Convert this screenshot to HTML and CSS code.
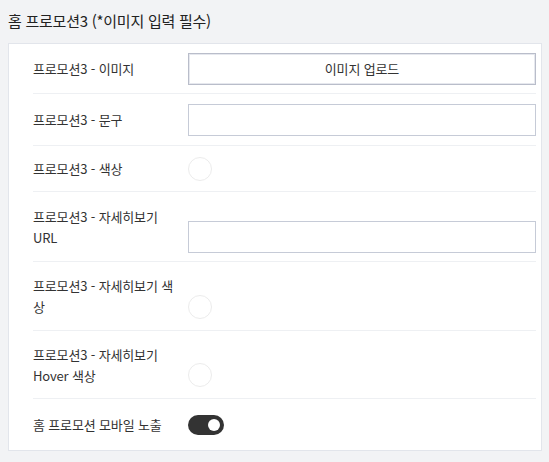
FILE: index.html
```html
<!DOCTYPE html>
<html lang="ko">
<head>
<meta charset="utf-8">
<link rel="stylesheet" href="styles.css">
</head>
<body>
<div class="page">
  <h2 class="title">홈 프로모션3 (*이미지 입력 필수)</h2>
  <div class="card">
    <div class="row row--r1">
      <div class="label">프로모션3 - 이미지</div>
      <div class="ctrl"><button class="upload" type="button">이미지 업로드</button></div>
    </div>
    <div class="row row--r2">
      <div class="label">프로모션3 - 문구</div>
      <div class="ctrl"><input class="field" type="text"></div>
    </div>
    <div class="row row--r3">
      <div class="label">프로모션3 - 색상</div>
      <div class="ctrl"><span class="swatch"></span></div>
    </div>
    <div class="row row--r4">
      <div class="label">프로모션3 - 자세히보기<br>URL</div>
      <div class="ctrl ctrl--low"><input class="field" type="text"></div>
    </div>
    <div class="row row--r5">
      <div class="label">프로모션3 - 자세히보기 색<br>상</div>
      <div class="ctrl ctrl--low"><span class="swatch"></span></div>
    </div>
    <div class="row row--r6">
      <div class="label">프로모션3 - 자세히보기<br>Hover 색상</div>
      <div class="ctrl ctrl--low"><span class="swatch"></span></div>
    </div>
    <div class="row row--r7">
      <div class="label">홈 프로모션 모바일 노출</div>
      <div class="ctrl"><span class="toggle"><span class="knob"></span></span></div>
    </div>
  </div>
</div>
</body>
</html>
```

FILE: styles.css
```css
* { box-sizing: border-box; }
html, body { margin: 0; padding: 0; }
body {
  background: #f2f3f5;
  font-family: "Noto Sans CJK KR", "Noto Sans", sans-serif;
  color: #333;
}
.page {
  width: 549px;
  height: 462px;
  padding: 8px 7px 0 8px;
}
.title {
  margin: 0 0 10px 0;
  height: 25px;
  font-size: 15px;
  line-height: 25px;
  font-weight: 400;
  color: #222;
  letter-spacing: -0.25px;
}
.card {
  background: #fff;
  border: 1px solid #e2e5eb;
  width: 534px;
  padding: 0 5px 0 24px;
}
.row {
  display: flex;
  align-items: center;
  border-bottom: 1px solid #eef0f3;
}
.row:last-child { border-bottom: none; }
.row--r1 { min-height: 50px; }
.row--r2 { min-height: 52px; }
.row--r3 { min-height: 46px; }
.row--r4 { min-height: 70px; }
.row--r5 { min-height: 69px; }
.row--r6 { min-height: 68px; }
.row--r7 { min-height: 51px; }
.label {
  width: 155px;
  flex: none;
  font-size: 13px;
  line-height: 21px;
  color: #333;
  letter-spacing: -0.15px;
}
.ctrl {
  flex: 1;
  display: flex;
  align-items: center;
}
.ctrl--low { padding-top: 21px; }
.upload {
  width: 100%;
  height: 32px;
  background: #fff;
  border: 1px solid #b9bdca;
  box-shadow: inset 0 0 0 1px #e6e8ee;
  font-family: "Noto Sans CJK KR", "Noto Sans", sans-serif;
  font-size: 13px;
  color: #333;
  padding: 0;
  letter-spacing: -0.15px;
}
.field {
  width: 100%;
  height: 32px;
  border: 1px solid #c6cbd7;
  background: #fff;
  margin: 0;
  padding: 0 8px;
  outline: none;
}
.swatch {
  display: block;
  width: 24px;
  height: 24px;
  border-radius: 50%;
  border: 1px solid #ececec;
  background: #fff;
}
.toggle {
  display: flex;
  align-items: center;
  justify-content: flex-end;
  width: 36px;
  height: 20px;
  border-radius: 10px;
  background: #333;
  padding-right: 4px;
}
.knob {
  display: block;
  width: 12px;
  height: 12px;
  border-radius: 50%;
  background: #fff;
}
```
